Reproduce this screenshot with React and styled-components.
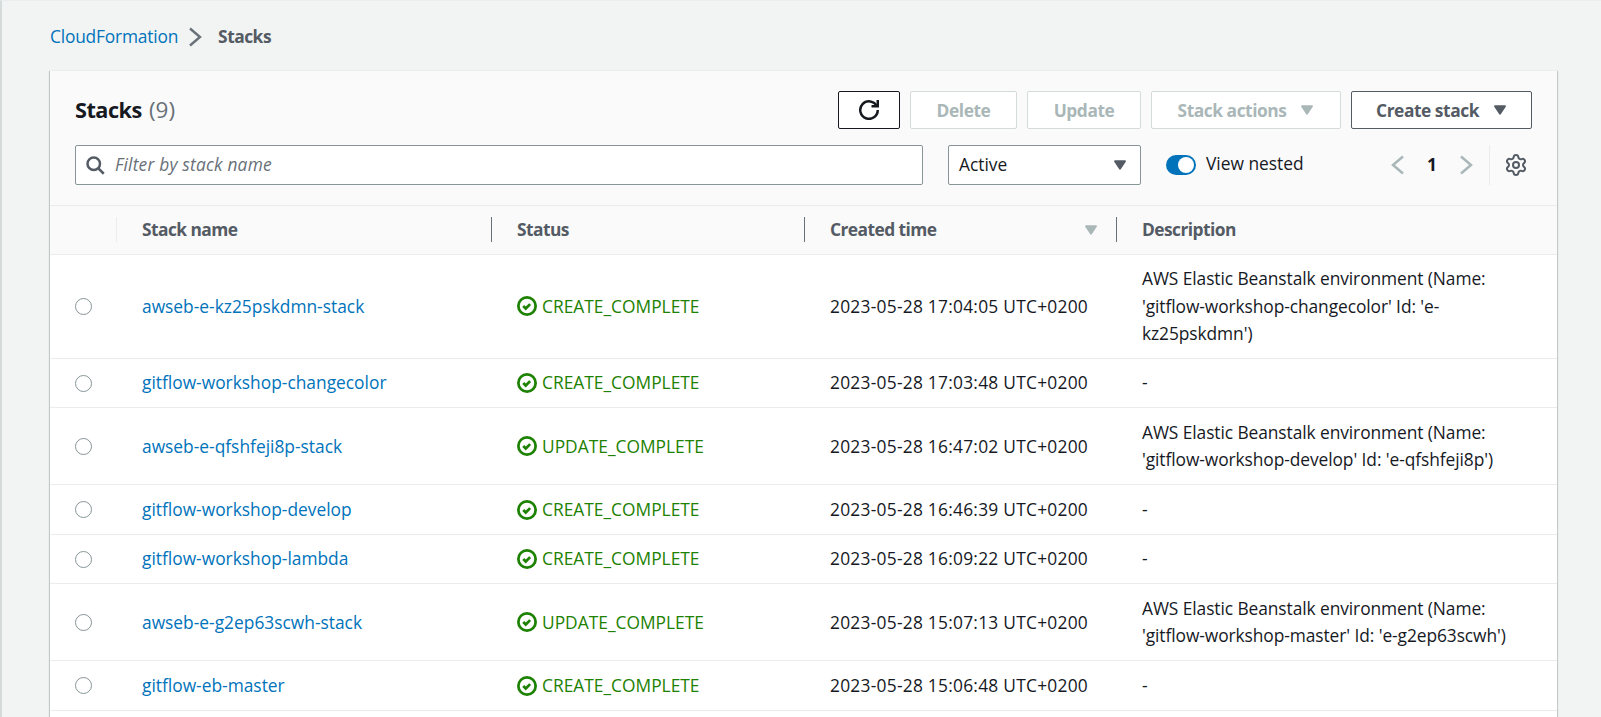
import React from 'react';
import styled, { createGlobalStyle } from 'styled-components';
import { Settings } from 'lucide-react';

const FONT = '"Open Sans", "Noto Sans", "Liberation Sans", sans-serif';
const COLUMNS = '66px 375px 313px 312px 1fr';

const stacks = [
  {
    name: 'awseb-e-kz25pskdmn-stack',
    status: 'CREATE_COMPLETE',
    created: '2023-05-28 17:04:05 UTC+0200',
    description: ["AWS Elastic Beanstalk environment (Name:", "'gitflow-workshop-changecolor' Id: 'e-", "kz25pskdmn')"],
  },
  {
    name: 'gitflow-workshop-changecolor',
    status: 'CREATE_COMPLETE',
    created: '2023-05-28 17:03:48 UTC+0200',
    description: ['-'],
  },
  {
    name: 'awseb-e-qfshfeji8p-stack',
    status: 'UPDATE_COMPLETE',
    created: '2023-05-28 16:47:02 UTC+0200',
    description: ["AWS Elastic Beanstalk environment (Name:", "'gitflow-workshop-develop' Id: 'e-qfshfeji8p')"],
  },
  {
    name: 'gitflow-workshop-develop',
    status: 'CREATE_COMPLETE',
    created: '2023-05-28 16:46:39 UTC+0200',
    description: ['-'],
  },
  {
    name: 'gitflow-workshop-lambda',
    status: 'CREATE_COMPLETE',
    created: '2023-05-28 16:09:22 UTC+0200',
    description: ['-'],
  },
  {
    name: 'awseb-e-g2ep63scwh-stack',
    status: 'UPDATE_COMPLETE',
    created: '2023-05-28 15:07:13 UTC+0200',
    description: ["AWS Elastic Beanstalk environment (Name:", "'gitflow-workshop-master' Id: 'e-g2ep63scwh')"],
  },
  {
    name: 'gitflow-eb-master',
    status: 'CREATE_COMPLETE',
    created: '2023-05-28 15:06:48 UTC+0200',
    description: ['-'],
  },
];

const Line = ({ size = 20, children, color = 'currentColor', width = 2 }) => (
  <svg width={size} height={size} viewBox='0 0 16 16' fill='none' stroke={color} strokeWidth={width}>
    {children}
  </svg>
);

const Caret = ({ color = '#545b64', size = 20 }) => (
  <svg width={size} height={size} viewBox='0 0 16 16' fill={color} stroke={color} strokeWidth='1.5' strokeLinejoin='round'>
    <path d='M4 5h8l-4 6z' />
  </svg>
);

export default function App() {
  return (
    <Page>
      <GlobalStyle />
      <Breadcrumbs>
        <CrumbLink>CloudFormation</CrumbLink>
        <Line size={20} color='#687078' width={1.9}>
          <path d='M4 1.2 12 8l-8 6.8' />
        </Line>
        <CrumbCurrent>Stacks</CrumbCurrent>
      </Breadcrumbs>
      <Card>
        <CardHeader>
          <TitleRow>
            <Title>
              Stacks <Count>(9)</Count>
            </Title>
            <Actions>
              <Button $w={62} $tone='dark' aria-label='Refresh'>
                <Line color='#16191f'>
                  <path d='M10 5h5V0' />
                  <path d='M15 8a7 7 0 1 1-.7-3' />
                </Line>
              </Button>
              <Button $w={107} $tone='disabled'>Delete</Button>
              <Button $w={114} $tone='disabled'>Update</Button>
              <Button $w={190} $tone='disabled' $menu>
                Stack actions <Caret color='#aab7b8' />
              </Button>
              <Button $w={181} $tone='normal' $menu>
                Create stack <Caret />
              </Button>
            </Actions>
          </TitleRow>
          <FilterRow>
            <Search>
              <Line color='#545b64'>
                <circle cx='7' cy='7' r='5' />
                <path d='m15 15-4.5-4.5' />
              </Line>
              <SearchHint>Filter by stack name</SearchHint>
            </Search>
            <Select>
              Active
              <Caret />
            </Select>
            <ToggleWrap>
              <Toggle />
              View nested
            </ToggleWrap>
            <Pager>
              <PagerArrow>
                <Line color='#aab7b8'>
                  <path d='M12 1.2 4 8l8 6.8' />
                </Line>
              </PagerArrow>
              <PageNumber>1</PageNumber>
              <PagerArrow>
                <Line color='#aab7b8'>
                  <path d='M4 1.2 12 8l-8 6.8' />
                </Line>
              </PagerArrow>
              <PagerDivider />
              <GearButton>
                <Settings size={24} strokeWidth={2} />
              </GearButton>
            </Pager>
          </FilterRow>
        </CardHeader>
        <HeadRow>
          <HeadCell />
          <HeadCell $light>Stack name</HeadCell>
          <HeadCell>Status</HeadCell>
          <HeadCell>
            Created time
            <SortMark>
              <Caret color='#aab7b8' />
            </SortMark>
          </HeadCell>
          <HeadCell>Description</HeadCell>
        </HeadRow>
        {stacks.map((stack) => (
          <Row key={stack.name}>
            <RadioCell>
              <Radio />
            </RadioCell>
            <Cell>
              <StackLink>{stack.name}</StackLink>
            </Cell>
            <Cell>
              <Status>
                <Line color='#1d8102' width={2.2}>
                  <circle cx='8' cy='8' r='6.9' />
                  <path d='m5 8 2 2 3.5-3.5' />
                </Line>
                {stack.status}
              </Status>
            </Cell>
            <TimeCell>{stack.created}</TimeCell>
            <DescriptionCell>
              {stack.description.map((line) => (
                <div key={line}>{line}</div>
              ))}
            </DescriptionCell>
          </Row>
        ))}
      </Card>
    </Page>
  );
}

const GlobalStyle = createGlobalStyle`
  html, body {
    margin: 0;
    padding: 0;
    height: 100%;
    overflow: hidden;
    background: #f2f3f3;
  }
  #root {
    height: 100%;
  }
`;

const Page = styled.div`
  box-sizing: border-box;
  height: 100%;
  display: flex;
  flex-direction: column;
  padding: 1px 44px 0 48px;
  border-left: 2px solid #d5dbdb;
  border-top: 1px solid #eaeded;
  font-family: ${FONT};
  font-size: 17.36px;
  line-height: 27.3px;
  color: #16191f;
`;

const Breadcrumbs = styled.nav`
  display: flex;
  align-items: center;
  gap: 7px;
  height: 68px;
  box-sizing: border-box;
  padding-top: 1px;
`;

const CrumbLink = styled.a`
  color: #0073bb;
  letter-spacing: -0.2px;
`;

const CrumbCurrent = styled.span`
  color: #545b64;
  font-weight: 700;
  letter-spacing: -0.5px;
  margin-left: 6px;
`;

const Card = styled.section`
  flex: 1;
  background: #ffffff;
  border-top: 1px solid #eaeded;
  box-shadow: 0 1px 1px rgba(0, 28, 36, 0.3), 1px 1px 1px rgba(0, 28, 36, 0.15),
    -1px 1px 1px rgba(0, 28, 36, 0.15);
`;

const CardHeader = styled.header`
  background: #fafafa;
  padding: 20px 25px 20px 25px;
  display: flex;
  flex-direction: column;
  gap: 16px;
`;

const TitleRow = styled.div`
  display: flex;
  align-items: center;
  justify-content: space-between;
  height: 38px;
`;

const Title = styled.h1`
  margin: 0;
  font-size: 21.7px;
  font-weight: 700;
  letter-spacing: -0.5px;
`;

const Count = styled.span`
  margin-left: 2px;
  font-size: 22.5px;
  font-weight: 400;
  color: #687078;
  letter-spacing: 0;
`;

const Actions = styled.div`
  display: flex;
  gap: 10px;
`;

const toneColors = {
  dark: { border: '#16191f', color: '#16191f' },
  disabled: { border: '#d5dbdb', color: '#aab7b8' },
  normal: { border: '#545b64', color: '#545b64' },
};

const Button = styled.button`
  box-sizing: border-box;
  width: ${(p) => p.$w}px;
  height: 38px;
  display: flex;
  align-items: center;
  justify-content: center;
  gap: ${(p) => (p.$menu ? 11 : 9)}px;
  padding: 0 0 0 ${(p) => (p.$menu ? 3 : 0)}px;
  font: 700 17.36px ${FONT};
  letter-spacing: -0.45px;
  background: #ffffff;
  border-radius: 2px;
  border: 1px solid ${(p) => toneColors[p.$tone].border};
  color: ${(p) => toneColors[p.$tone].color};
`;

const FilterRow = styled.div`
  display: flex;
  align-items: center;
  height: 40px;
`;

const Search = styled.div`
  box-sizing: border-box;
  flex: 0 0 848px;
  height: 40px;
  display: flex;
  align-items: center;
  gap: 10px;
  padding-left: 9px;
  background: #ffffff;
  border: 1px solid #879596;
  border-radius: 2px;
`;

const SearchHint = styled.span`
  font-style: italic;
  color: #687078;
  letter-spacing: 0.2px;
`;

const Select = styled.div`
  box-sizing: border-box;
  flex: 0 0 193px;
  height: 40px;
  margin-left: 25px;
  display: flex;
  align-items: center;
  justify-content: space-between;
  padding: 0 10px;
  background: #ffffff;
  border: 1px solid #879596;
  border-radius: 2px;
`;

const ToggleWrap = styled.label`
  margin-left: 25px;
  display: flex;
  align-items: center;
  gap: 10px;
  padding-bottom: 2px;
`;

const Toggle = styled.span`
  box-sizing: border-box;
  width: 30px;
  height: 20px;
  border-radius: 10px;
  padding: 2px;
  background: #0073bb;
  display: flex;
  justify-content: flex-end;
  margin-top: 2px;
  &::after {
    content: '';
    width: 16px;
    height: 16px;
    border-radius: 50%;
    background: #ffffff;
  }
`;

const Pager = styled.div`
  margin-left: auto;
  display: flex;
  align-items: center;
  height: 40px;
  padding-right: 4px;
`;

const PagerArrow = styled.span`
  display: flex;
  width: 20px;
  justify-content: center;
`;

const PageNumber = styled.span`
  width: 48px;
  text-align: center;
  font-weight: 700;
`;

const PagerDivider = styled.span`
  width: 1px;
  height: 40px;
  margin: 0 14px 0 13px;
  background: #eaeded;
`;

const GearButton = styled.span`
  display: flex;
  color: #545b64;
`;

const HeadRow = styled.div`
  display: grid;
  grid-template-columns: ${COLUMNS};
  background: #fafafa;
  border-top: 1px solid #eaeded;
  border-bottom: 1px solid #eaeded;
  height: 49.6px;
  box-sizing: border-box;
  align-items: center;
`;

const HeadCell = styled.div`
  box-sizing: border-box;
  height: 25px;
  display: flex;
  align-items: center;
  justify-content: space-between;
  padding: 0 15px 0 25px;
  font-weight: 700;
  letter-spacing: -0.55px;
  color: #545b64;
  border-left: 1px solid ${(p) => (p.$light ? '#eaeded' : '#687078')};
  &:first-child {
    border-left: none;
  }
`;

const SortMark = styled.span`
  display: flex;
`;

const Row = styled.div`
  display: grid;
  grid-template-columns: ${COLUMNS};
  align-items: center;
  padding: 10.65px 0;
  border-bottom: 1px solid #eaeded;
`;

const Cell = styled.div`
  padding-left: 26px;
`;

const TimeCell = styled(Cell)`
  letter-spacing: 0.25px;
`;

const DescriptionCell = styled(Cell)`
  letter-spacing: -0.08px;
`;

const RadioCell = styled.div`
  display: flex;
  padding-left: 25px;
`;

const Radio = styled.span`
  box-sizing: border-box;
  width: 17px;
  height: 17px;
  border-radius: 50%;
  border: 1.3px solid #879596;
  background: #ffffff;
`;

const StackLink = styled.a`
  color: #0073bb;
`;

const Status = styled.span`
  display: flex;
  align-items: center;
  gap: 5px;
  color: #1d8102;
`;
